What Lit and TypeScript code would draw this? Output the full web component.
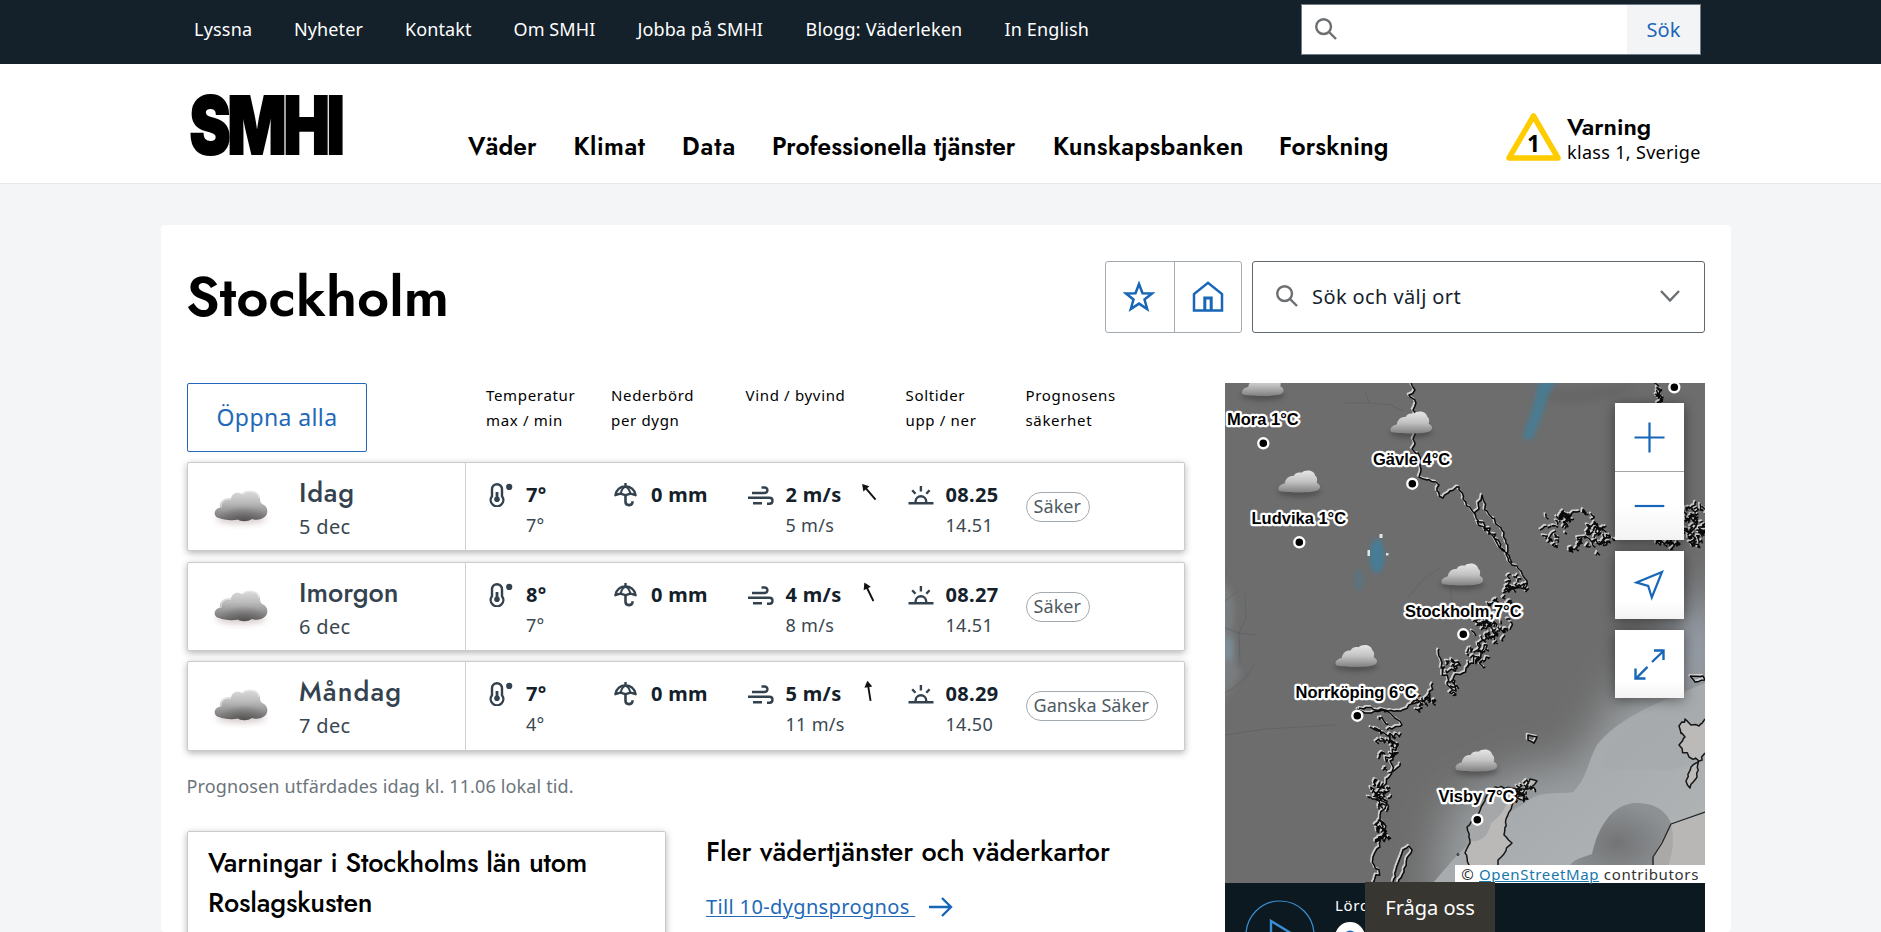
import { LitElement, html, css, svg } from "lit";

type Spaced = [text: string, spacing: number];

const TOP_LINKS: Spaced[] = [
  ["Lyssna", 0.2],
  ["Nyheter", 0.1],
  ["Kontakt", 0.1],
  ["Om SMHI", 0.1],
  ["Jobba på SMHI", 0.1],
  ["Blogg: Väderleken", 0.18],
  ["In English", 0.14],
];

const MAIN_LINKS: Spaced[] = [
  ["Väder", 0.1],
  ["Klimat", 0.5],
  ["Data", 1],
  ["Professionella tjänster", 0.03],
  ["Kunskapsbanken", 0.34],
  ["Forskning", 0.1],
];

const COLUMNS = [
  ["Temperatur", "max / min"],
  ["Nederbörd", "per dygn"],
  ["Vind / byvind", ""],
  ["Soltider", "upp / ner"],
  ["Prognosens", "säkerhet"],
];

const DAYS = [
  { day: "Idag", ls: 0.75, date: "5 dec", max: "7°", min: "7°", rain: "0 mm", wind: "2 m/s", gust: "5 m/s", dir: -41, up: "08.25", down: "14.51", conf: "Säker" },
  { day: "Imorgon", ls: 0, date: "6 dec", max: "8°", min: "7°", rain: "0 mm", wind: "4 m/s", gust: "8 m/s", dir: -26, up: "08.27", down: "14.51", conf: "Säker" },
  { day: "Måndag", ls: 1.1, date: "7 dec", max: "7°", min: "4°", rain: "0 mm", wind: "5 m/s", gust: "11 m/s", dir: -9, up: "08.29", down: "14.50", conf: "Ganska Säker" },
];

/* ---------- icons ---------- */

const search = (size: number) => html`<svg width=${size} height=${size} viewBox="0 0 22 22" fill="none" stroke="#6b6f72" stroke-width="2.4"><circle cx="8.6" cy="8.6" r="7.4" /><path d="M14 14l7 7" /></svg>`;

const CLOUD = "M5 28C-1 27 -1 19 6 17.5C5 11 11 7.500 17 8.500C18 2.500 24 1.500 28 4C31 -1 45 -1 46 8.500C46 11 46.500 12.500 48 14C55 16 55 26 49 28C46 30 41 30 38 29C33 32 27 31.500 24 29.500C18 31 10 30 5 28Z";

const cloud = html`<svg class="cloud" width="64" height="44" viewBox="-5 -3 64 44">
  <defs>
    <linearGradient id="cg" x1="0" y1="0" x2="0" y2="1"><stop offset="0" stop-color="#dcdcdc" /><stop offset=".4" stop-color="#bababa" /><stop offset=".75" stop-color="#8c8b8b" /><stop offset="1" stop-color="#706d6d" /></linearGradient>
    <radialGradient id="cd" cx=".55" cy="1" r=".5"><stop offset="0" stop-color="#423e3e" stop-opacity=".6" /><stop offset="1" stop-color="#423e3e" stop-opacity="0" /></radialGradient>
    <filter id="cb" x="-30%" y="-60%" width="160%" height="220%"><feGaussianBlur stdDeviation="3" /></filter>
  </defs>
  <ellipse cx="27" cy="29" rx="25" ry="5" fill="#b09a9a" opacity=".5" filter="url(#cb)" />
  <path d=${CLOUD} fill="url(#cg)" />
  <path d=${CLOUD} fill="url(#cd)" />
  <path d="M7 18C6 11 12 8 17 9.500M29 4.500C32 0 44 0 45 8" fill="none" stroke="#ececec" stroke-width="1.200" opacity=".7" />
</svg>`;

const thermometer = html`<svg width="24" height="24" viewBox="0 0 24 24" fill="none" stroke="#33424e">
  <path d="M3 6.200a5 5 0 0 1 10 0v7a6.300 6.300 0 1 1-10 0z" stroke-width="2.400" />
  <path d="M8 9v7" stroke-width="2.800" /><circle cx="8" cy="16.200" r="2.800" fill="#33424e" stroke="none" />
  <circle cx="20.200" cy="3.900" r="3.100" fill="#33424e" stroke="none" />
</svg>`;

const umbrella = html`<svg width="24" height="24" viewBox="0 0 24 24" fill="none" stroke="#33424e" stroke-width="2.400">
  <path d="M11.500 0v3.500M1.400 12.200C2.300 6.500 6.500 3.500 11.500 3.500s9.200 3 10.100 8.700l-4.900-1.500-5.200 1.500-5.200-1.500z" stroke-linejoin="round" />
  <path d="M6.800 10.800C7.200 7.500 9 4.600 11.500 3.600 14 4.600 15.800 7.500 16.200 10.800" stroke-width="2.100" />
  <path d="M11.500 11v7.800c0 4.400 7 4.400 7 .2v-.8" stroke-width="2.600" />
</svg>`;

const wind = html`<svg width="26" height="20" viewBox="0 0 26 20" fill="none" stroke="#33424e" stroke-width="2.400">
  <path d="M4 7h12c4.500 0 4.500-5.500.5-5.500h-3M0 11.800h21.500c4 0 4 6 0 6h-2.500M5 17.300h9" />
</svg>`;

const sun = html`<svg width="26" height="19" viewBox="0 0 26 19" fill="none" stroke="#33424e" stroke-width="2.400">
  <path d="M.5 17.300h25M7.600 17v-1.500a5.200 5.200 0 0 1 10.600 0v1.500M12.900 0v5.400M4.200 4.300l3.300 3.500M21.600 4.300l-3.300 3.500" />
</svg>`;

const arrow = (deg: number) => html`<svg class="dir" width="24" height="24" viewBox="-12 -12 24 24"><g transform="rotate(${deg})"><path d="M0 10V-5" stroke="#111" stroke-width="1.900" /><path d="M0-10.500L4-4H-4Z" fill="#111" /></g></svg>`;

/* ---------- map geometry ---------- */

type P = [number, number];

/** Small deterministic generator, so that the coast is the same on each load. */
function rng(seed: number) {
  let s = seed;
  return () => {
    s = (s * 1664525 + 1013904223) % 4294967296;
    return s / 4294967296;
  };
}

/** Subdivides a polyline and shakes the inner points to get a ragged shore. */
function jag(points: P[], amp: number, seed: number, step = 3.5): string {
  const r = rng(seed);
  let d = `M${points[0][0]} ${points[0][1]}`;
  for (let i = 1; i < points.length; i++) {
    const [x0, y0] = points[i - 1];
    const [x1, y1] = points[i];
    const n = Math.max(1, Math.round(Math.hypot(x1 - x0, y1 - y0) / step));
    for (let k = 1; k <= n; k++) {
      const t = k / n;
      const a = k === n ? 0 : amp;
      d += `L${(x0 + (x1 - x0) * t + (r() - 0.5) * 2 * a).toFixed(1)} ${(y0 + (y1 - y0) * t + (r() - 0.5) * 2 * a).toFixed(1)}`;
    }
  }
  return d;
}

/** Scatters islets over an ellipse. */
function islets(cx: number, cy: number, rx: number, ry: number, count: number, seed: number, hollow = 0): string {
  const r = rng(seed);
  let d = "";
  for (let i = 0; i < count; i++) {
    const a = r() * Math.PI * 2;
    const q = hollow + (1 - hollow) * Math.sqrt(r());
    let x = cx + Math.cos(a) * rx * q;
    let y = cy + Math.sin(a) * ry * q;
    d += `M${x.toFixed(1)} ${y.toFixed(1)}`;
    const n = 2 + Math.floor(r() * 5);
    for (let k = 0; k < n; k++) {
      x += (r() - 0.5) * 7;
      y += (r() - 0.5) * 7;
      d += `L${x.toFixed(1)} ${y.toFixed(1)}`;
    }
  }
  return d;
}

const COAST = [
  jag([[186, 0], [190, 7], [184, 12], [191, 20], [188, 27], [192, 35], [188, 56], [190, 60], [187, 66], [195, 74], [196, 86], [194, 94], [202, 97], [211, 99], [214, 102], [212, 108], [218, 115], [225, 108], [234, 104], [238, 116], [250, 131]], 1.6, 11),
  jag([[250, 131], [260, 143], [268, 153], [275, 165], [283, 175], [287, 182], [296, 188], [302, 198], [300, 206], [288, 204], [278, 210]], 2.4, 5),
  jag([[250, 131], [257, 112], [262, 128], [276, 145], [281, 160], [287, 180]], 2, 6),
  jag([[252, 138], [265, 145], [272, 160], [280, 168]], 3, 7),
  jag([[214, 266], [217, 280], [222, 300], [231, 308], [228, 296], [238, 290], [246, 280], [262, 262], [264, 268]], 3, 21),
  jag([[208, 300], [205, 313], [195, 318], [184, 322], [176, 328], [160, 327], [134, 325]], 1.6, 22),
  jag([[132, 326], [140, 330], [158, 327], [166, 331], [177, 342], [162, 347]], 1.6, 23),
  jag([[145, 344], [165, 352], [172, 362], [165, 378], [168, 386], [158, 404], [150, 412], [162, 420], [155, 437], [160, 448], [155, 464], [148, 474], [154, 487], [148, 500]], 2.6, 24),
  jag([[168, 500], [174, 478], [178, 467], [184, 463], [187, 467], [182, 475], [179, 489], [173, 500]], 0.8, 25),
  jag([[307, 353], [312, 354], [309, 360], [303, 357], [303, 352], [307, 353]], 0.8, 26),
  jag([[465, 293], [478, 293], [480, 297], [470, 299], [465, 293]], 0.6, 27),
  islets(292, 202, 12, 10, 13, 31),
  islets(279, 222, 14, 10, 15, 32),
  islets(264, 246, 24, 17, 40, 33),
  islets(253, 272, 13, 10, 14, 34),
  islets(225, 292, 8, 16, 12, 35),
  islets(164, 360, 9, 20, 16, 36),
  islets(158, 408, 10, 22, 20, 37),
  islets(157, 440, 6, 16, 13, 38),
  islets(347, 148, 28, 22, 52, 39, 0.35),
  islets(341, 140, 10, 12, 12, 47),
  islets(375, 160, 13, 13, 13, 40),
  islets(470, 142, 12, 20, 40, 41),
  islets(447, 159, 16, 3, 14, 42),
  islets(434, 10, 3, 10, 9, 43),
  islets(198, 318, 11, 6, 10, 45),
  islets(297, 408, 9, 8, 16, 46),
].join("");

const GOTLAND = jag([[262, 412], [254, 430], [242, 444], [245, 460], [240, 470], [244, 482], [244, 500], [266, 500], [273, 482], [273, 477], [287, 460], [279, 452], [281, 436], [288, 420], [300, 406], [305, 396], [312, 398], [306, 404], [294, 407], [286, 405], [270, 404], [262, 412]], 1, 51);
const SAAREMAA = jag([[480, 336], [474, 343], [466, 342], [460, 336], [454, 343], [460, 354], [454, 362], [464, 374], [474, 378], [480, 370]], 2, 52);
const SORVE = jag([[474, 378], [472, 394], [465, 405], [461, 398], [466, 384], [474, 378]], 1.2, 53);

const CITIES = [
  { name: "Mora 1°C", x: 2, y: 42, dx: 38.3, dy: 60.3, cx: 37.5, cy: 1.5 },
  { name: "Gävle 4°C", x: 148, y: 82, dx: 187.3, dy: 100.7, cx: 186, cy: 39 },
  { name: "Ludvika 1°C", x: 26.5, y: 141, dx: 74.3, dy: 159.3, cx: 74, cy: 98 },
  { name: "Stockholm,7°C", x: 180, y: 234, dx: 238.3, dy: 251.3, cx: 237, cy: 191 },
  { name: "Norrköping 6°C", x: 70.5, y: 315.3, dx: 132.3, dy: 332.7, cx: 131, cy: 272.5 },
  { name: "Visby 7°C", x: 213.5, y: 419.2, dx: 252.3, dy: 436.7, cx: 251, cy: 377 },
];

const map = svg`
  <defs>
    <linearGradient id="mc" x1="0" y1="0" x2="0" y2="1"><stop offset="0" stop-color="#e6e6e6"/><stop offset=".5" stop-color="#c2c2c2"/><stop offset="1" stop-color="#808080"/></linearGradient>
    <linearGradient id="sea" x1="0" y1="0" x2="1" y2="1"><stop offset="0" stop-color="#9da1a4"/><stop offset="1" stop-color="#b3b6b7"/></linearGradient>
    <radialGradient id="blob"><stop offset="0" stop-color="#727476"/><stop offset="1" stop-color="#8e9193"/></radialGradient>
    <filter id="b1" x="-10%" y="-10%" width="120%" height="120%"><feGaussianBlur stdDeviation=".7"/></filter>
    <filter id="b4" x="-50%" y="-50%" width="200%" height="200%"><feGaussianBlur stdDeviation="3.5"/></filter>
    <filter id="b20" x="-50%" y="-50%" width="200%" height="200%"><feGaussianBlur stdDeviation="20"/></filter>
    <filter id="b2" x="-60%" y="-30%" width="220%" height="160%"><feGaussianBlur stdDeviation="2"/></filter>
  </defs>
  <rect width="480" height="500" fill="#6d6d6d"/>
  <path d="M205 520L225 420L300 385L350 380L400 300L490 230V520Z" fill="#989c9f" filter="url(#b20)"/>
  <path d="M490 190L440 260L490 320Z" fill="#9aa2ad" filter="url(#b20)"/>
  <path d="M-10 190Q14 210 8 240T16 290L-10 330Z" fill="#83888b" filter="url(#b4)" opacity=".6"/>
  <rect x="-4" y="255" width="12" height="22" fill="#7c8f9a" filter="url(#b4)"/>
  <path d="M310 10Q350 35 420 0" fill="#666" filter="url(#b4)"/>
  <path d="M208 500C225 480 238 464 252 456C262 442 280 432 300 420C315 406 335 412 348 409C362 396 364 375 372 362C385 346 400 336 428 322L480 300V500Z" fill="url(#sea)"/>
  <path d="M376 383C395 392 420 382 440 388L480 378V300C450 330 395 330 376 383Z" fill="#a5aaad" opacity=".7"/>
  <path d="M336 500C336 488 340 484 345 482C350 475 360 474 367 471C372 448 385 420 412 420C440 420 452 440 447 462C446 480 442 492 428 500Z" fill="url(#blob)"/>
  <path d="M480 430L446 441L437 460L429 473V500H480Z" fill="#b9b7b5"/>
  <path d="M446 441Q452 465 440 490L429 492V472Z" fill="#aaa9a8"/>
  <path d=${GOTLAND} fill="#bab9b8"/>
  <path d="M262 412L254 430L242 444L245 458Q262 460 266 440Q277 432 280 424L290 412L286 405Z" fill="#a6a7a8"/>
  <path d=${SAAREMAA + "Z" + SORVE} fill="#bcbab8"/>
  <g fill="#3f809c">
    <path d="M315 -6H334L328 4Q322 12 320 24L308 56H298Q300 44 306 30Z" filter="url(#b2)" opacity=".75"/>
    <ellipse cx="152" cy="173" rx="7.500" ry="17" filter="url(#b2)" opacity=".85"/>
    <ellipse cx="134" cy="197" rx="4" ry="11" filter="url(#b2)" opacity=".4"/>
  </g>
  <g fill="#dfe6ea"><rect x="154.500" y="151" width="3" height="4"/><rect x="142.500" y="167" width="2.500" height="6"/><rect x="161" y="170" width="2.500" height="2.500"/></g>
  <g fill="none" stroke="#55595c" stroke-width=".8" opacity=".6">
    <path d="M0 218L13 208M20 210L21 235L14 250L0 245M14 250L15 280M14 250L30 252M0 310Q20 300 30 280M0 352L40 346L110 342"/>
    <path d="M140 8L144 20L166 22L178 28M144 20L120 20M182 215L200 195L215 185M225 205L228 225L250 240"/>
  </g>
  <g fill="none" stroke-linejoin="round">
    <path d=${COAST} stroke="#d0d0d0" stroke-width="2" transform="translate(-1.300 -1.300)"/>
    <path d=${COAST} stroke="#0a0a0a" stroke-width="1.500"/>
    <path d=${GOTLAND + SAAREMAA + SORVE} stroke="#161616" stroke-width="1.500"/>
    <path d="M480 429L446 441L437 460L428 474V500" stroke="#222" stroke-width="1.300"/>
    <circle cx="233" cy="471.500" r="1" stroke="#222"/>
  </g>
  ${CITIES.map((c) => svg`
    <g transform="translate(${c.cx - 21.5} ${c.cy - 11}) scale(.8)">
      <ellipse cx="27" cy="27" rx="27" ry="7" fill="#333" opacity=".45" filter="url(#b4)"/>
      <path d="M2 26C-1 21 5 17.500 9 17C10 10 15 7 20 7.500C22 3 27 2.500 30 3.500C35 -1 46 0 47 7C50 9 50 13 49 16C53 18 55 22 51 25C47 29 10 29 2 26Z" fill="url(#mc)" filter="url(#b1)"/>
    </g>`)}
  <g fill="#000" stroke="#fff" stroke-width="2.400">
    ${CITIES.map((c) => svg`<circle cx=${c.dx} cy=${c.dy} r="5"/>`)}
    <circle cx="449.300" cy="4.300" r="5"/>
  </g>
  ${CITIES.map((c) => svg`<text class="city" x=${c.x} y=${c.y}>${c.name}</text>`)}
`;

class AppRoot extends LitElement {
  static styles = css`
    :host { display: block; height: 932px; overflow: hidden; position: relative; background: #f4f5f7; font-family: "Noto Sans", sans-serif; font-size: 18px; color: #000; }
    * { box-sizing: border-box; }
    svg { display: block; flex: none; }
    .jost { font-family: Jost, Lato, sans-serif; }

    .top { height: 64px; background: #14212b; padding-left: 194px; display: flex; color: #fff; }
    .links { display: grid; grid-template-columns: 100px 111px 108.5px 124px 168px 199px 102px; width: 1107px; padding-top: 17px; line-height: 25px; white-space: nowrap; }
    .field { width: 400px; height: 51px; margin-top: 4px; background: #fff; border: 1px solid #6f7c86; display: flex; padding-left: 13px; }
    .field svg { margin-top: 13px; }
    .go { margin-left: auto; width: 73px; background: #f3f4f6; color: #1d66b8; font-size: 20px; line-height: 49px; text-align: center; }

    .head { height: 120px; background: #fff; border-bottom: 1px solid #e6e9ea; padding-left: 188px; display: flex; }
    .logo { margin-top: 27px; overflow: visible; }
    .main { display: flex; width: 1038px; margin-left: 126px; padding-top: 65px; line-height: 35px; font-size: 24.5px; font-weight: 600; white-space: nowrap; }
    .main .links2 { display: grid; grid-template-columns: 105.500px 108.500px 90px 281px 226px 120px; }
    .warn { display: flex; gap: 6px; margin-top: 48px; }
    .warn b { display: block; font-size: 24px; line-height: 28px; font-weight: 600; margin-top: 1px; }
    .warn span { display: block; line-height: 22px; letter-spacing: .32px; white-space: nowrap; }
    .num { font: bold 23px "Noto Sans", sans-serif; text-anchor: middle; }

    .card { margin: 41px 150px 0 161px; height: 707px; background: #fff; border-radius: 4px; padding: 36px 26px 0; }
    .title { display: flex; height: 72px; }
    h1 { margin: 0 0 0 -1px; flex: 1; font-size: 56px; line-height: 71px; font-weight: 600; letter-spacing: .05px; }
    .pair { display: flex; width: 137px; border: 1px solid #a3abb0; border-radius: 3px; margin-right: 10px; }
    .pair div { flex: 1; display: grid; place-items: center; padding: 0 1px 1.5px 0; }
    .pair div + div { border-left: 1px solid #a3abb0; padding-right: 0; }
    .pick { width: 453px; border: 1px solid #5f696f; border-radius: 3px; display: flex; align-items: center; padding: 0 24px 1.500px 23px; font-size: 20px; letter-spacing: .4px; color: #14212b; gap: 14px; }
    .pick svg:last-child { margin-left: auto; }

    .cols { display: flex; justify-content: space-between; margin-top: 50px; }
    .left { width: 998px; }
    .labels { display: grid; grid-template-columns: 299px 125px 134.500px 160px 120px 1fr; height: 79px; font-size: 15px; letter-spacing: .67px; line-height: 25px; white-space: nowrap; }
    .open { width: 180px; height: 69px; border: 1px solid #2169b8; border-radius: 2px; color: #2169b8; font-size: 23px; letter-spacing: .4px; line-height: 66px; text-align: center; }
    .row { display: flex; height: 89.400px; margin-bottom: 10.200px; border: 1px solid #c9cccd; border-radius: 2px; background: #fff; box-shadow: 0 2px 7px rgba(0, 0, 0, .3); color: #3a4751; }
    .who { width: 278px; border-right: 1px solid #cfd1d2; display: flex; padding-left: 21px; }
    .cloud { margin-top: 24px; }
    .name { padding-top: 14px; margin-left: 26px; }
    .name .jost { font-size: 27px; line-height: 32px; color: #33424e; font-weight: 500; }
    .name .date { font-size: 20px; line-height: 36.500px; letter-spacing: .35px; }
    .data { display: grid; grid-template-columns: 125px 134.500px 160px 120px 1fr; padding: 17px 0 0 20px; flex: 1; }
    .cell { display: grid; grid-template-columns: 40px auto 1fr; align-content: start; white-space: nowrap; }
    .cell b { font-size: 20px; line-height: 30px; letter-spacing: .3px; color: #14212b; }
    .cell i { font-style: normal; grid-column: 2 / 4; line-height: 30.500px; letter-spacing: .3px; }
    .cell svg { margin: 3px 0 0 2.500px; }
    .cell .low { margin-top: 3px; }
    .cell svg.dir { margin: 0 0 0 15.500px; }
    .pill { border: 1px solid #a3abb0; border-radius: 16px; height: 30px; line-height: 27px; padding: 0 8px 0 7px; margin-top: 12px; width: max-content; color: #4e5a62; letter-spacing: .08px; }
    .issued { margin: 9px 0 0 -.5px; line-height: 50px; color: #6b757c; letter-spacing: .14px; }
    .bottom { display: flex; gap: 40px; margin-top: 20px; }
    .box { width: 479px; height: 130px; border: 1px solid #c9cccd; border-radius: 2px; box-shadow: 0 2px 7px rgba(0, 0, 0, .3); padding: 11px 20px; font-size: 27px; line-height: 40px; font-weight: 500; letter-spacing: -.13px; }
    h2 { margin: 0; font-size: 27px; line-height: 41px; font-weight: 500; letter-spacing: .05px; white-space: nowrap; }
    .more { display: flex; align-items: center; gap: 14px; margin-top: 21.500px; color: #2169b8; font-size: 20px; letter-spacing: .36px; white-space: pre; }
    .more span { text-decoration: underline; text-decoration-thickness: 1px; text-underline-offset: 2px; }

    .right { width: 480px; position: relative; }
    .city { font: bold 16.500px "Liberation Sans", sans-serif; fill: #000; stroke: #fff; stroke-width: 4.500px; stroke-linejoin: round; paint-order: stroke; }
    .tools { position: absolute; right: 21px; top: 20px; width: 69px; display: flex; flex-direction: column; gap: 11px; }
    .tool { background: linear-gradient(#fff 75%, #f3f3f4); box-shadow: 0 2px 12px rgba(0, 0, 0, .45); }
    .tool svg + svg { border-top: 1px solid #a3a3a3; }
    .osm { position: absolute; right: 0; top: 482px; width: 250px; height: 18px; background: #fff; font-size: 15px; line-height: 19px; letter-spacing: .65px; text-align: right; padding-right: 6px; color: #333; white-space: nowrap; }
    .osm u { color: #1778ab; }
    .player { height: 60px; background: #0c1920; display: flex; padding-left: 20px; gap: 20px; color: #fff; }
    .player .time { font-size: 15px; letter-spacing: .7px; line-height: 20px; padding-top: 12px; }
    .player .time svg { margin-top: 7px; }
    .player > svg { margin-top: 17px; }
    .ask { position: absolute; left: 1365px; top: 882px; width: 130px; height: 50px; background: #383630; color: #fff; font-size: 20px; line-height: 51px; text-align: center; }
  `;

  render() {
    return html`
      <div class="top">
        <nav class="links">${TOP_LINKS.map(([t, s]) => html`<span style="letter-spacing:${s}px">${t}</span>`)}</nav>
        <div class="field">${search(22)}<div class="go">Sök</div></div>
      </div>
      <header class="head">
        <svg class="logo" width="154" height="68" viewBox="0 0 154 68"><text x="1.500" y="62.500" textLength="152" lengthAdjust="spacingAndGlyphs" style="font:900 80px Inter,sans-serif;letter-spacing:-4px" stroke="#000" stroke-width="2">SMHI</text></svg>
        <div class="main jost"><div class="links2">${MAIN_LINKS.map(([t, s]) => html`<span style="letter-spacing:${s}px">${t}</span>`)}</div></div>
        <div class="warn">
          <svg width="55" height="50" viewBox="0 0 55 50"><path d="M27.500 4L52 46H3Z" fill="none" stroke="#fc0" stroke-width="5.500" stroke-linejoin="round" /><text class="num" x="27.500" y="40">1</text></svg>
          <div><b class="jost">Varning</b><span>klass 1, Sverige</span></div>
        </div>
      </header>
      <main class="card">
        <div class="title">
          <h1 class="jost">Stockholm</h1>
          <div class="pair">
            <div><svg width="32" height="31" viewBox="0 0 32 31" fill="none" stroke="#1766b8" stroke-width="2.500"><path d="M16 3L19.500 12.200L29 12.500L21.500 18.500L24.200 28L16 22.600L7.800 28L10.500 18.500L3 12.500L12.500 12.200Z" /></svg></div>
            <div><svg width="32" height="31" viewBox="0 0 32 31" fill="none" stroke="#1766b8" stroke-width="2.500"><path d="M2 29.500V13L16 1.800L30 13V29.500Z" /><path d="M12.800 29V17H19.200V29" stroke-width="3" /></svg></div>
          </div>
          <div class="pick">${search(22)}<span>Sök och välj ort</span><svg width="20" height="12" viewBox="0 0 20 12" fill="none" stroke="#6b6f72" stroke-width="2.400"><path d="M1 1L10 10.500L19 1" /></svg></div>
        </div>
        <div class="cols">
          <section class="left">
            <div class="labels"><div class="open">Öppna alla</div>${COLUMNS.map(([a, b]) => html`<div>${a}<br />${b}</div>`)}</div>
            ${DAYS.map((d) => html`
              <article class="row">
                <div class="who">${cloud}
                  <div class="name"><div class="jost" style="letter-spacing:${d.ls}px">${d.day}</div><div class="date">${d.date}</div></div>
                </div>
                <div class="data">
                  <div class="cell">${thermometer}<b>${d.max}</b><span></span><span></span><i>${d.min}</i></div>
                  <div class="cell">${umbrella}<b>${d.rain}</b></div>
                  <div class="cell"><div class="low">${wind}</div><b>${d.wind}</b>${arrow(d.dir)}<span></span><i>${d.gust}</i></div>
                  <div class="cell"><div class="low">${sun}</div><b>${d.up}</b><span></span><span></span><i>${d.down}</i></div>
                  <div class="pill">${d.conf}</div>
                </div>
              </article>`)}
            <p class="issued">Prognosen utfärdades idag kl. 11.06 lokal tid.</p>
            <div class="bottom">
              <div class="box jost">Varningar i Stockholms län utom Roslagskusten</div>
              <div>
                <h2 class="jost">Fler vädertjänster och väderkartor</h2>
                <div class="more"><span>Till 10-dygnsprognos </span><svg width="24" height="20" viewBox="0 0 24 20" fill="none" stroke="#1766b8" stroke-width="2.400"><path d="M0 10H22M13 1L22 10L13 19" /></svg></div>
              </div>
            </div>
          </section>
          <aside class="right">
            <svg width="480" height="500" viewBox="0 0 480 500">${map}</svg>
            <div class="tools">
              <div class="tool">
                <svg width="69" height="68" viewBox="0 0 69 68" stroke="#1766b8" stroke-width="2.200"><path d="M19.500 34.500H49.500M34.500 19.500V49.500" /></svg>
                <svg width="69" height="69" viewBox="0 0 69 69" stroke="#1766b8" stroke-width="2.200"><path d="M19.500 34.500H49.500" /></svg>
              </div>
              <div class="tool"><svg width="69" height="68" viewBox="0 0 69 68" fill="none" stroke="#1766b8" stroke-width="2.200"><path d="M21.500 31.500L47 21L36.800 46.500L33.200 35Z" /></svg></div>
              <div class="tool"><svg width="69" height="68" viewBox="0 0 69 68" fill="none" stroke="#1766b8" stroke-width="2.400"><path d="M20.500 49L32.500 36.800M20.500 38.500V48.500H30.500M37 32L49 20.500M39 20.500H48.500V30" /></svg></div>
            </div>
            <div class="osm">© <u>OpenStreetMap</u> contributors</div>
            <div class="player">
              <svg width="70" height="70" viewBox="0 0 70 70" fill="none" stroke="#3a8fd4"><circle cx="35" cy="35" r="34" stroke-width="1.200" /><path d="M26 21V49L49 35Z" stroke-width="2.400" /></svg>
              <div class="time"><div>Lörd</div><svg width="30" height="30" viewBox="0 0 30 30"><circle cx="15" cy="15" r="15" fill="#fff" /><circle cx="15" cy="15" r="6.500" fill="#1766b8" /></svg></div>
            </div>
          </aside>
        </div>
      </main>
      <div class="ask">Fråga oss</div>
    `;
  }
}

customElements.define("app-root", AppRoot);
